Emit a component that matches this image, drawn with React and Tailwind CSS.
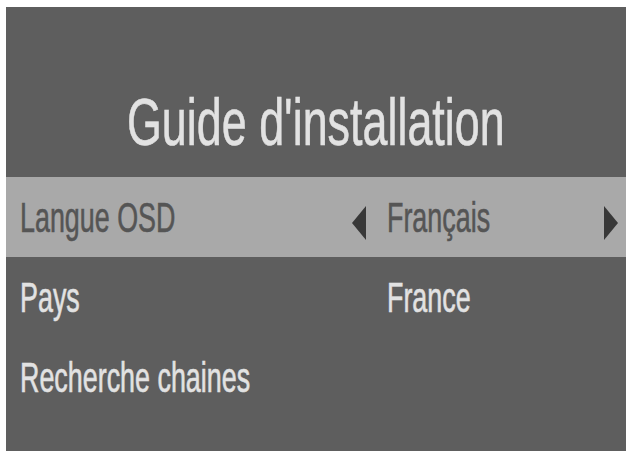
const ROWS = [
  { label: 'Langue OSD', value: 'Français', active: true },
  { label: 'Pays', value: 'France' },
  { label: 'Recherche chaines', value: '' },
];

function Arrow({ dir }) {
  return (
    <svg width="14" height="38" viewBox="0 0 14 38" className="shrink-0 mt-[27px]">
      {dir === 'left' ? (
        <path d="M0 19 L14 2 L14 36 Z" fill="#383838" />
      ) : (
        <path d="M14 19 L0 2 L0 36 Z" fill="#383838" />
      )}
    </svg>
  );
}

function Squeezed({ children, className = '' }) {
  return (
    <span
      className={`inline-block whitespace-nowrap origin-left scale-x-[0.64] [-webkit-text-stroke:0.6px_currentColor] ${className}`}
    >
      {children}
    </span>
  );
}

export default function App() {
  return (
    <div
      className="w-[634px] h-[459px] bg-white pt-[7px] pl-[6px] pr-[8px] pb-[8px]"
      style={{ fontFamily: '"Liberation Sans", Arial, sans-serif' }}
    >
      <div className="h-full bg-[#5e5e5e] flex flex-col">
        <div className="h-[170px] shrink-0 pt-[82px] flex justify-center">
          <span className="inline-block whitespace-nowrap origin-center scale-x-[0.68] text-[66px] leading-none text-[#e2e2e2] [-webkit-text-stroke:0.6px_#e2e2e2]">
            Guide d'installation
          </span>
        </div>

        {ROWS.map(({ label, value, active }) => (
          <div
            key={label}
            className={`h-[80px] shrink-0 grid grid-cols-[346px_1fr] text-[42px] leading-none ${
              active ? 'bg-[#a9a9a9] text-[#555555]' : 'text-[#e2e2e2]'
            }`}
          >
            <div className="pl-[14px] pt-[20px]">
              <Squeezed>{label}</Squeezed>
            </div>
            <div className="flex items-start pr-[8px]">
              {active ? <Arrow dir="left" /> : <span className="w-[14px] shrink-0" />}
              <div className="flex-1 pl-[21px] pt-[20px]">
                <Squeezed>{value}</Squeezed>
              </div>
              {active && <Arrow dir="right" />}
            </div>
          </div>
        ))}
      </div>
    </div>
  );
}
